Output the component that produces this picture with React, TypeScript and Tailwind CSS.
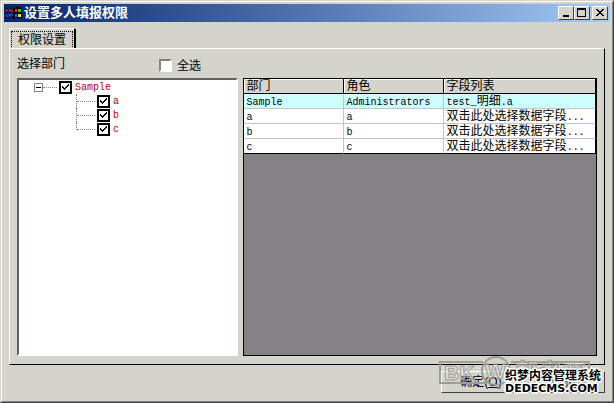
'use client';

import React, { useState } from "react";

const raised =
  "border border-t-white border-l-white border-r-[#404040] border-b-[#404040] bg-[#d5d4cc]";

const head =
  "border-r border-b border-black px-[3px] py-0 leading-3.5 font-normal shadow-[inset_1px_1px_white]";

const cell =
  "border-r border-b border-[#c6c3c6] px-[3px] py-0 leading-3.5 group-last:border-b-black last:border-r-black";

const rows = [
  { dept: "Sample", role: "Administrators", fields: "test_明细.a" },
  { dept: "a", role: "a", fields: "双击此处选择数据字段..." },
  { dept: "b", role: "b", fields: "双击此处选择数据字段..." },
  { dept: "c", role: "c", fields: "双击此处选择数据字段..." },
];

const TitleIcon: React.FC = () => (
  <svg width="16" height="14" viewBox="0 0 16 14" shapeRendering="crispEdges" aria-hidden="true">
    <path d="M0 3h1v2H0zM3 3h2v2H3zM6 4h1v2H6zM1 5h1v1H1zM4 5h1v1H4z" fill="#d01818" />
    <path d="M0 8h1v2H0zM3 8h2v2H3zM6 8h1v2H6zM1 10h1v1H1zM4 10h1v1H4z" fill="#2850e8" />
    <path d="M0 2h2v1H0zM3 2h2v1H3zM5 3h2v1H5zM0 6h2v1H0zM3 6h2v1H3zM0 11h2v1H0zM3 11h2v1H3zM5 10h2v1H5z" fill="#000" />
    <path d="M7 2h2V1h5v1h2v11h-1v-1h-6v1H7z" fill="#000" />
    <path d="M9 3h2v3H9z" fill="#ff2010" />
    <path d="M12 3h3v3h-3z" fill="#10d020" />
    <path d="M9 8h2v3H9z" fill="#2070ff" />
    <path d="M12 8h3v3h-3z" fill="#ffe010" />
  </svg>
);

// Latin runs are set smaller so they take half the width of a CJK character
const MixedText: React.FC<{ text: string }> = ({ text }) => (
  <>
    {text.split(/([\x20-\x7e]+)/).map((part, i) =>
      i % 2 ? (
        <span key={i} className="font-['Liberation_Mono',monospace] text-[10px] leading-none">
          {part}
        </span>
      ) : (
        part
      )
    )}
  </>
);

const TreeCheck: React.FC<{ label: string }> = ({ label }) => {
  const [on, setOn] = useState(true);
  return (
    <label className="flex h-3.5 items-center gap-[3px] font-['Liberation_Mono',monospace] text-[10px] leading-3.5 text-[#c00000]">
      <span className="grid h-[13px] w-[13px] shrink-0">
        <input
          type="checkbox"
          checked={on}
          onChange={() => setOn(!on)}
          className="col-start-1 row-start-1 h-[13px] w-[13px] appearance-none border-2 border-black bg-white"
        />
        {on && (
          <svg
            viewBox="0 0 13 13"
            className="pointer-events-none col-start-1 row-start-1 h-[13px] w-[13px]"
            shapeRendering="crispEdges"
          >
            <path d="M3 5h1v1h1v1h1v-1h1v-1h1v-1h1v-1h1v2h-1v1h-1v1h-1v1h-1v1h-1v-1h-1v-1h-1z" />
          </svg>
        )}
      </span>
      <span className="pt-0.5">{label}</span>
    </label>
  );
};

const Watermark: React.FC = () => (
  <div className="pointer-events-none absolute right-2 bottom-1 h-12 w-[166px]" aria-hidden="true">
    <svg width="166" height="48" viewBox="0 0 166 48">
      <g fill="#ffffff" fillOpacity="0.3" stroke="#9c9c98">
        <path d="M44 12H1v21h47M72 12h78v7" fill="none" strokeWidth="2" />
        <circle cx="57" cy="21" r="14" fill="none" strokeWidth="2" />
        <text x="5" y="30" fontSize="21" fontWeight="bold" fontFamily="Liberation Sans, sans-serif">BK</text>
        <text x="46" y="29" fontSize="22" fontWeight="bold" fontFamily="Liberation Sans, sans-serif">W</text>
        <text x="76" y="31" fontSize="24" fontWeight="bold" fontFamily="Noto Sans CJK SC, sans-serif">帮考网</text>
      </g>
      <g fill="#000" stroke="#fff" strokeWidth="3" strokeLinejoin="round" paintOrder="stroke" fontWeight="bold">
        <text x="66" y="30" fontSize="12" fontFamily="Noto Sans CJK SC, sans-serif">织梦内容管理系统</text>
        <text x="66" y="42" fontSize="11" fontFamily="DejaVu Sans, sans-serif">DEDECMS.COM</text>
      </g>
    </svg>
  </div>
);

const App: React.FC = () => {
  const [all, setAll] = useState(false);

  return (
    <main className="relative flex min-h-screen flex-col border border-t-[#d5d4cc] border-r-[#404040] border-b-[#404040] border-l-[#d5d4cc] bg-[#d5d4cc] font-['Liberation_Sans','Noto_Sans_CJK_SC',sans-serif] text-xs text-black">
      <div className="flex grow flex-col border border-t-white border-r-[#848284] border-b-[#848284] border-l-white p-0.5">
        {/* Title bar */}
        <header className="flex h-[18px] items-center bg-linear-to-r from-[#08246b] to-[#a5cbf7] px-0.5">
          <TitleIcon />
          <h1 className="grow pl-0.5 text-[13px] leading-[18px] font-bold text-white">设置多人填报权限</h1>
          <div className="flex">
            <button aria-label="最小化" className={`${raised} flex h-3.5 w-4 items-center justify-center`}>
              <svg width="12" height="10" viewBox="0 0 12 10" shapeRendering="crispEdges">
                <path d="M3 7h6v2H3z" />
              </svg>
            </button>
            <button aria-label="最大化" className={`${raised} flex h-3.5 w-4 items-center justify-center`}>
              <svg width="12" height="10" viewBox="0 0 12 10" shapeRendering="crispEdges">
                <path d="M1 0h9v9H1zM2 2v6h7V2z" fillRule="evenodd" />
              </svg>
            </button>
            <button aria-label="关闭" className={`${raised} ml-0.5 flex h-3.5 w-4 items-center justify-center`}>
              <svg width="12" height="10" viewBox="0 0 12 10" shapeRendering="crispEdges">
                <path d="M2 1h2v1h1v1h2v-1h1v-1h2v1h-1v1h-1v1h-1v1h1v1h1v1h1v1h-2v-1h-1v-1h-2v1h-1v1h-2v-1h1v-1h1v-1h1v-1h-1v-1h-1v-1h-1z" />
              </svg>
            </button>
          </div>
        </header>

        <div className="flex grow flex-col px-[5px] pt-1.5">
          {/* Tab */}
          <div className="flex" role="tablist">
            <button
              role="tab"
              aria-selected="true"
              className="-mb-px h-[21px] rounded-t-xs border-t border-r-2 border-l border-t-white border-r-black border-l-white bg-[#d5d4cc] px-px pt-px"
            >
              <span className="block h-[18px] border border-dotted border-black px-1.5 leading-4">权限设置</span>
            </button>
          </div>

          <section className="flex grow flex-col border border-t-white border-r-black border-b-black border-l-white px-[7px] pb-2">
            <div className="flex h-[29px] items-center">
              <span className="w-[142px]">选择部门</span>
              <label className="flex items-center gap-[5px] pt-1">
                <input
                  type="checkbox"
                  checked={all}
                  onChange={() => setAll(!all)}
                  className="h-[13px] w-[13px] appearance-none border-2 border-t-[#848284] border-r-white border-b-white border-l-[#848284] bg-white checked:bg-black"
                />
                全选
              </label>
            </div>

            <div className="grid grow grid-cols-[minmax(0,221fr)_minmax(0,355fr)] gap-[5px]">
              {/* Department tree */}
              <div className="border-2 border-t-[#606060] border-r-white border-b-white border-l-[#606060] bg-white pl-[15px]">
                <div className="flex h-3.5 items-center">
                  <button
                    aria-label="折叠"
                    className="flex h-[9px] w-[9px] items-center justify-center border border-[#848284]"
                  >
                    <span className="h-px w-[5px] bg-black" />
                  </button>
                  <span className="mr-0.5 w-3.5 border-t border-dotted border-[#848284]" />
                  <TreeCheck label="Sample" />
                </div>
                <ul className="ml-[42px]">
                  {["a", "b", "c"].map((n) => (
                    <li key={n} className="group flex h-3.5">
                      <span className="h-3.5 border-l border-dotted border-[#848284] group-last:h-2" />
                      <span className="mr-0.5 h-2 w-[18px] border-b border-dotted border-[#848284]" />
                      <TreeCheck label={n} />
                    </li>
                  ))}
                </ul>
              </div>

              {/* Field grid */}
              <div className="border border-black bg-[#848284]">
                <table className="w-full table-fixed border-separate border-spacing-0 text-left">
                  <thead>
                    <tr className="bg-[#d5d4cc]">
                      <th className={`${head} w-[100px]`}>部门</th>
                      <th className={`${head} w-[100px]`}>角色</th>
                      <th className={head}>字段列表</th>
                    </tr>
                  </thead>
                  <tbody>
                    {rows.map((r) => (
                      <tr key={r.dept} className="group bg-white first:bg-[#ceffff]">
                        <td className={cell}><MixedText text={r.dept} /></td>
                        <td className={cell}><MixedText text={r.role} /></td>
                        <td className={cell}><MixedText text={r.fields} /></td>
                      </tr>
                    ))}
                  </tbody>
                </table>
              </div>
            </div>
          </section>

          <footer className="flex h-[34px] items-start justify-end gap-1 pt-1.5">
            <button className={`${raised} h-[22px] w-20`}>确定(<u>O</u>)</button>
            <button className={`${raised} h-[22px] w-20`}>取消(<u>C</u>)</button>
          </footer>
        </div>
      </div>
      <Watermark />
    </main>
  );
};

export default App;
